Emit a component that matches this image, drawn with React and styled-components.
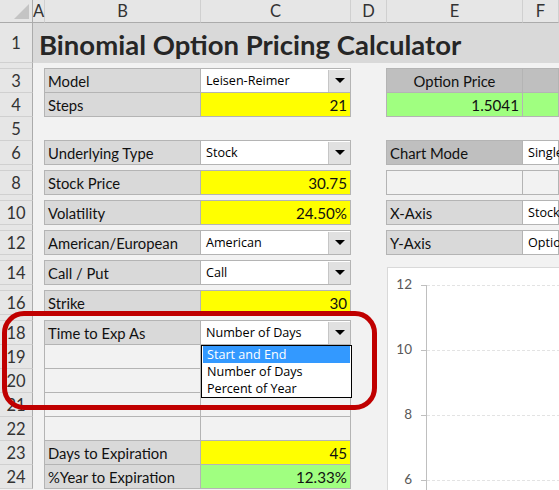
import React from "react";
import styled, { createGlobalStyle } from "styled-components";

const GlobalStyle = createGlobalStyle`
  html, body {
    margin: 0;
    padding: 0;
    background: #f2f2f2;
  }
`;

// excel row number -> height; thin spacer rows have no visible number
const rowHeights = {
  1: 40, 2: 6, 3: 24, 4: 24, 5: 24, 6: 24, 7: 6, 8: 24, 9: 6, 10: 24, 11: 6,
  12: 24, 13: 6, 14: 24, 15: 6, 16: 24, 17: 6, 18: 24, 19: 24, 20: 24, 21: 24,
  22: 24, 23: 24, 24: 24,
};
const excelRows = Object.keys(rowHeights).map(Number);

const COL = { A: 2, B: 3, C: 4, D: 5, E: 6, F: 7 };

function Sheet() {
  return (
    <Grid>
      <Corner>
        <CornerMark />
      </Corner>
      {Object.keys(COL).map((letter) => (
        <ColHead key={letter} $c={COL[letter]}>
          {letter}
        </ColHead>
      ))}
      {excelRows.map((r) => (
        <RowHead key={r} $r={r}>
          {rowHeights[r] > 10 ? r : ""}
        </RowHead>
      ))}

      <TitleBand>Binomial Option Pricing Calculator</TitleBand>

      <Label $r={3} $c={COL.B}>Model</Label>
      <Combo $r={3} $c={COL.C}>
        Leisen-Reimer
        <ArrowButton />
      </Combo>
      <Label $r={4} $c={COL.B}>Steps</Label>
      <InputCell $r={4} $c={COL.C}>21</InputCell>

      <HeadLabel $r={3} $c={COL.E} $center>Option Price</HeadLabel>
      <HeadLabel $r={3} $c={COL.F} />
      <OutputCell $r={4} $c={COL.E}>1.5041</OutputCell>
      <OutputCell $r={4} $c={COL.F} />

      <Label $r={6} $c={COL.B}>Underlying Type</Label>
      <Combo $r={6} $c={COL.C}>
        Stock
        <ArrowButton />
      </Combo>
      <HeadLabel $r={6} $c={COL.E}>Chart Mode</HeadLabel>
      <Combo $r={6} $c={COL.F}>Single</Combo>

      <Label $r={8} $c={COL.B}>Stock Price</Label>
      <InputCell $r={8} $c={COL.C}>30.75</InputCell>
      <Blank $r={8} $c={COL.E} />
      <Blank $r={8} $c={COL.F} />

      <Label $r={10} $c={COL.B}>Volatility</Label>
      <InputCell $r={10} $c={COL.C}>24.50%</InputCell>
      <Label $r={10} $c={COL.E}>X-Axis</Label>
      <Combo $r={10} $c={COL.F}>Stock Price</Combo>

      <Label $r={12} $c={COL.B}>American/European</Label>
      <Combo $r={12} $c={COL.C}>
        American
        <ArrowButton />
      </Combo>
      <Label $r={12} $c={COL.E}>Y-Axis</Label>
      <Combo $r={12} $c={COL.F}>Option Price</Combo>

      <Label $r={14} $c={COL.B}>Call / Put</Label>
      <Combo $r={14} $c={COL.C}>
        Call
        <ArrowButton />
      </Combo>

      <Label $r={16} $c={COL.B}>Strike</Label>
      <InputCell $r={16} $c={COL.C}>30</InputCell>

      <Label $r={18} $c={COL.B}>Time to Exp As</Label>
      <Combo $r={18} $c={COL.C}>
        Number of Days
        <ArrowButton />
        <DropList>
          <DropItem $selected>Start and End</DropItem>
          <DropItem>Number of Days</DropItem>
          <DropItem>Percent of Year</DropItem>
        </DropList>
      </Combo>

      {[19, 20, 21, 22].map((r) => (
        <React.Fragment key={r}>
          <Blank $r={r} $c={COL.B} />
          <Blank $r={r} $c={COL.C} />
        </React.Fragment>
      ))}

      <Label $r={23} $c={COL.B}>Days to Expiration</Label>
      <InputCell $r={23} $c={COL.C}>45</InputCell>
      <Label $r={24} $c={COL.B}>%Year to Expiration</Label>
      <OutputCell $r={24} $c={COL.C}>12.33%</OutputCell>

      <Chart>
        <svg width="100%" height="100%">
          <line x1="38.5" y1="17" x2="38.5" y2="400" stroke="#bfbfbf" />
          {[
            ["12", 17],
            ["10", 82],
            ["8", 147],
            ["6", 212],
          ].map(([label, y]) => (
            <g key={label}>
              <line x1="39" y1={y + 0.5} x2="400" y2={y + 0.5} stroke="#e3e3e3" strokeDasharray="3 2" />
              <line x1="33" y1={y + 0.5} x2="38" y2={y + 0.5} stroke="#bfbfbf" />
              <text
                x="24"
                y={y + 1}
                textAnchor="end"
                dominantBaseline="middle"
                fontSize="13.5"
                fontFamily="Lato, sans-serif"
                fill="#595959"
              >
                {label}
              </text>
            </g>
          ))}
        </svg>
      </Chart>

      <Highlight />
    </Grid>
  );
}

export default function App() {
  return (
    <>
      <GlobalStyle />
      <Sheet />
    </>
  );
}

const Grid = styled.div`
  position: relative;
  display: grid;
  grid-template-columns: 33px 12px 156px 150px 36px 136px 1fr;
  grid-template-rows: 23px ${excelRows.map((r) => rowHeights[r] + "px").join(" ")};
  width: 559px;
  height: 490px;
  overflow: hidden;
  background: #f2f2f2;
  font-family: Lato, "Liberation Sans", sans-serif;
  color: #111;
`;

const Corner = styled.div`
  grid-row: 1;
  grid-column: 1;
  position: relative;
  background: #e6e6e6;
  border-right: 1px solid #ababab;
  border-bottom: 1px solid #ababab;
  box-sizing: border-box;
`;

const CornerMark = styled.div`
  position: absolute;
  right: 3px;
  bottom: 3px;
  width: 15px;
  height: 15px;
  background: #c4c4c4;
  clip-path: polygon(100% 0, 100% 100%, 0 100%);
`;

const ColHead = styled.div`
  grid-row: 1;
  grid-column: ${(p) => p.$c};
  display: flex;
  align-items: center;
  justify-content: center;
  background: #e6e6e6;
  border-right: 1px solid #d0d0d0;
  border-bottom: 1px solid #ababab;
  box-sizing: border-box;
  font-size: 16.5px;
  color: #333;
  overflow: visible;
  white-space: nowrap;
`;

const RowHead = styled.div`
  grid-row: ${(p) => p.$r + 1};
  grid-column: 1;
  display: flex;
  align-items: center;
  justify-content: center;
  background: #e6e6e6;
  border-right: 1px solid #ababab;
  border-bottom: 1px solid #d0d0d0;
  box-sizing: border-box;
  font-size: 16.5px;
  color: #333;
  overflow: hidden;
`;

const TitleBand = styled.div`
  grid-row: 2;
  grid-column: 2 / -1;
  display: flex;
  align-items: center;
  padding: 3px 0 0 6px;
  background: #d9d9d9;
  font-size: 27.5px;
  font-weight: 700;
  color: #262626;
  white-space: nowrap;
`;

const Cell = styled.div`
  grid-row: ${(p) => p.$r + 1};
  grid-column: ${(p) => p.$c};
  margin: -1px 0 0 -1px;
  display: flex;
  align-items: center;
  justify-content: flex-start;
  padding: 1px 3px 0 3px;
  border: 1px solid #b4b4b4;
  background: #f2f2f2;
  font-size: 14.8px;
  white-space: nowrap;
  overflow: hidden;
  min-width: 0;
`;

const Blank = styled(Cell)``;

const Label = styled(Cell)`
  background: #d9d9d9;
`;

const HeadLabel = styled(Cell)`
  background: #bfbfbf;
  justify-content: ${(p) => (p.$center ? "center" : "flex-start")};
`;

const InputCell = styled(Cell)`
  justify-content: flex-end;
  background: #ffff00;
  font-size: 15.2px;
`;

const OutputCell = styled(Cell)`
  justify-content: flex-end;
  background: #a0ff80;
  font-size: 15.2px;
`;

const Combo = styled(Cell)`
  position: relative;
  justify-content: space-between;
  padding: 0 0 0 5px;
  background: #ffffff;
  font-family: "Open Sans", "Noto Sans", sans-serif;
  font-size: 12.6px;
  color: #000;
  overflow: visible;
`;

const ArrowButton = styled.span`
  display: flex;
  align-items: center;
  justify-content: center;
  width: 22px;
  height: 22px;
  flex: none;
  background: #e1e1e1;
  border-left: 1px solid #c6c6c6;
  box-sizing: border-box;

  &::after {
    content: "";
    border-left: 5px solid transparent;
    border-right: 5px solid transparent;
    border-top: 5px solid #000;
  }
`;

const DropList = styled.div`
  position: absolute;
  left: 0;
  top: calc(100% + 1px);
  z-index: 4;
  width: 151px;
  padding: 0 1px;
  box-sizing: border-box;
  background: #fff;
  border: 1px solid #000;
`;

const DropItem = styled.div`
  height: 17px;
  line-height: 17px;
  padding-left: 4px;
  background: ${(p) => (p.$selected ? "#3399ff" : "transparent")};
  color: ${(p) => (p.$selected ? "#fff" : "#000")};
`;

const Chart = styled.div`
  grid-row: 15 / -1;
  grid-column: 6 / -1;
  margin: 6px -40px -40px 0;
  background: #fff;
  border: 1px solid #d9d9d9;
`;

const Highlight = styled.div`
  position: absolute;
  left: 2px;
  top: 311px;
  width: 375px;
  height: 99px;
  box-sizing: border-box;
  border: 5px solid #c00000;
  border-radius: 22px;
  z-index: 3;
  pointer-events: none;
`;
